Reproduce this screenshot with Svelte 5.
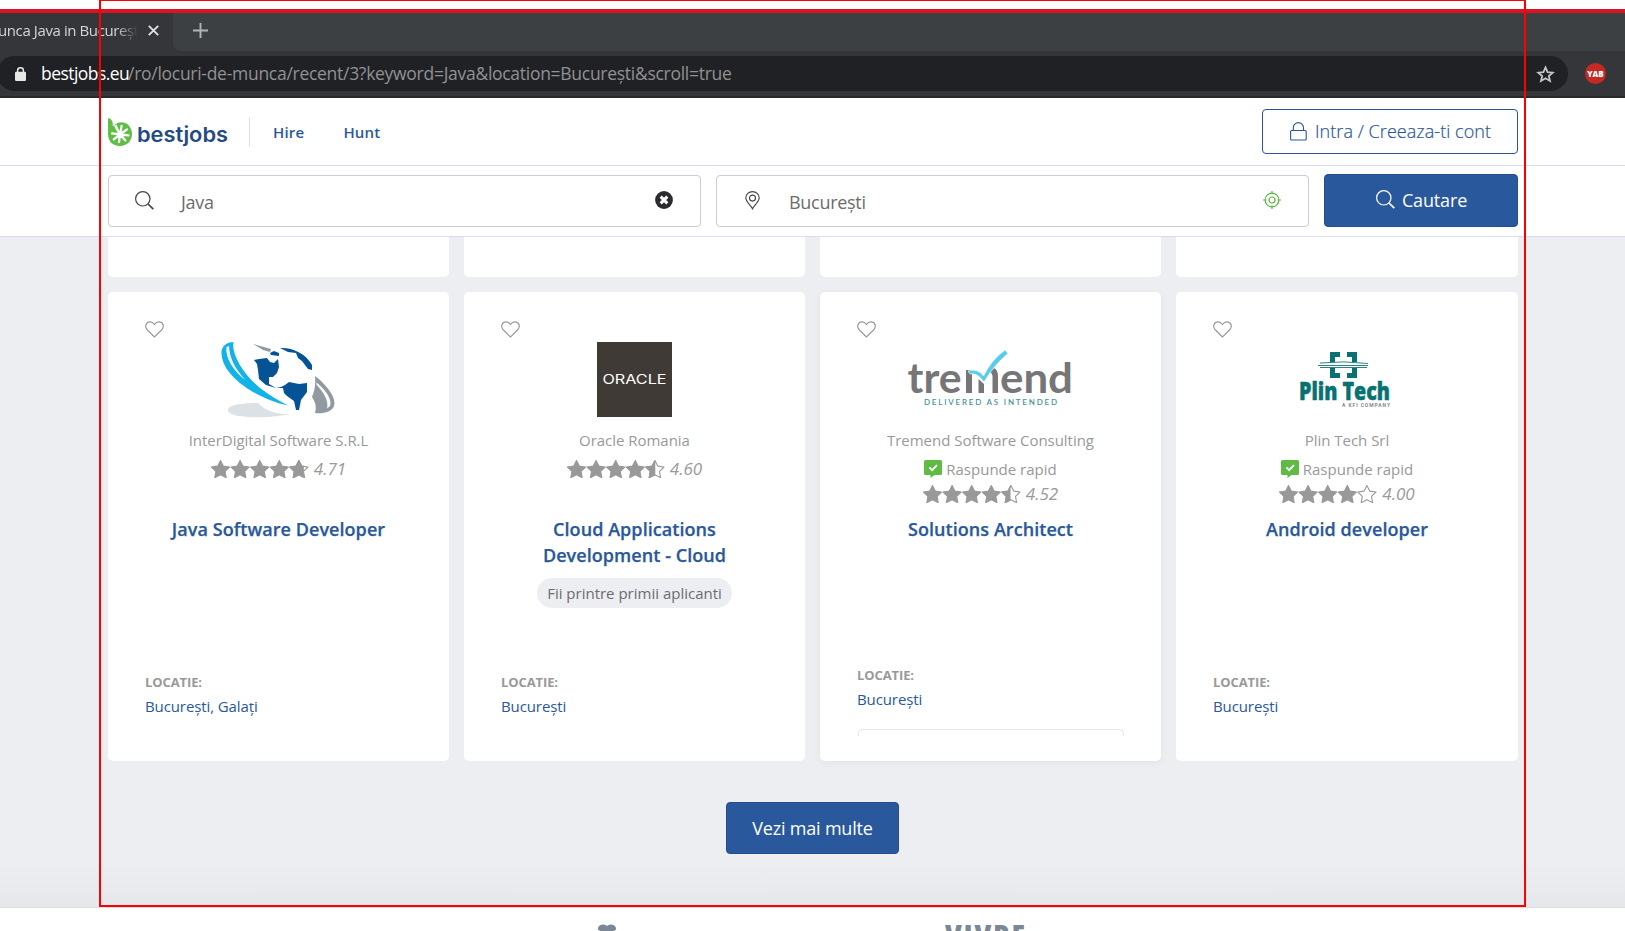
<script>
  const jobs = [
    { logo: 'globe', company: 'InterDigital Software S.R.L', fast: false, score: '4.71', last: 0.76, title: ['Java Software Developer'], place: 'București, Galați' },
    { logo: 'oracle', company: 'Oracle Romania', fast: false, score: '4.60', last: 0.52, title: ['Cloud Applications', 'Development - Cloud'], pill: 'Fii printre primii aplicanti', place: 'București' },
    { logo: 'tremend', company: 'Tremend Software Consulting', fast: true, score: '4.52', last: 0.48, title: ['Solutions Architect'], place: 'București', raised: true },
    { logo: 'plin', company: 'Plin Tech Srl', fast: true, score: '4.00', last: 0, title: ['Android developer'], place: 'București' }
  ];
  const starPath = 'M9.5 .4 L12.3 6.1 L18.6 7 L14.1 11.4 L15.2 17.7 L9.5 14.8 L3.8 17.7 L4.9 11.4 L.4 7 L6.7 6.1 Z';
</script>

{#snippet magnifier()}
  <svg class="ico" width="19" height="19" viewBox="0 0 19 19" fill="none" stroke="currentColor"><circle cx="7.8" cy="7.8" r="7.2" stroke-width="1.2" /><path d="M13 13l5.3 5.2" stroke-width="1.7" /></svg>
{/snippet}

<div class="screen">
  <div class="accent"></div>
  <div class="tabs">
    <div class="tab">
      <span class="tabtext">unca Java in București</span>
      <svg width="11" height="11" viewBox="0 0 11 11" stroke="#dfe0e2" stroke-width="1.9"><path d="M.8.8l9.4 9.4M10.2.8L.8 10.2" /></svg>
    </div>
    <div class="strip">
      <svg width="15" height="15" viewBox="0 0 15 15" stroke="#b1b3b5" stroke-width="1.9"><path d="M7.5 0v15M0 7.5h15" /></svg>
    </div>
  </div>
  <div class="toolbar">
    <div class="url">
      <svg width="11" height="14" viewBox="0 0 11 14"><rect y="4.8" width="11" height="9.2" rx="1.3" fill="#e8e8e9" /><path d="M2.6 6V3.4a2.9 2.6 0 0 1 5.8 0V6" fill="none" stroke="#e8e8e9" stroke-width="1.5" /></svg>
      <span class="host">bestjobs.eu</span><span class="path">/ro/locuri-de-munca/recent/3?keyword=Java&amp;location=București&amp;scroll=true</span>
      <svg class="bookmark" width="19" height="18" viewBox="0 0 19 18" fill="none" stroke="#c4c5c7" stroke-width="1.8"><path d="M9.5 2.4l2.1 4.7 5.1.5-3.9 3.4 1.2 5-4.5-2.7L5 16l1.2-5-3.9-3.4 5.1-.5z" /></svg>
    </div>
    <div class="yab">YAB</div>
  </div>

  <header>
    <div class="wrap head">
      <svg class="brand" width="124" height="32" viewBox="0 0 124 32">
        <path d="M0 0C4.200 1 5 4 4.800 8.300C7 6 10 4.300 13.500 4.300C19.500 4.300 24 9.500 24 16C24 23 19 28 12 28C4.500 28 0 23 0 16Z" fill="#5fbf45" />
        <g stroke="#fff" stroke-width="2.300" stroke-linecap="round"><path d="M12 16.500L7.600 8.500M12 16.500L13.600 8M12 16.500L19 11.400M12 16.500L20.500 17.300M12 16.500L17.300 22.300M12 16.500L11 24M12 16.500L5.800 21.300M12 16.500L4 15.300" /></g>
        <path d="M6 7.500L8.500 6.600 12 15.500Z" fill="#fff" />
        <text x="29" y="24" textLength="91" lengthAdjust="spacingAndGlyphs" class="brandtext">bestjobs</text>
      </svg>
      <nav><b>Hire</b><b>Hunt</b></nav>
      <div class="login">
        <svg width="17" height="19" viewBox="0 0 17 19" fill="none" stroke="currentColor" stroke-width="1.1"><rect x=".6" y="8.500" width="15.600" height="9.500" rx="1" /><path d="M3.300 8.500V5.800a5.100 5.200 0 0 1 10.200 0v2.700" /></svg>
        <span>Intra / Creeaza-ti cont</span>
      </div>
    </div>
  </header>

  <div class="search">
    <div class="wrap fields">
      <div class="field">
        {@render magnifier()}
        <span class="value">Java</span>
        <svg class="end" width="18" height="18" viewBox="0 0 18 18"><circle cx="9" cy="9" r="8.900" fill="#2b2b2e" /><path d="M5.700 5.700l6.600 6.600M12.300 5.700l-6.600 6.600" stroke="#fff" stroke-width="3.100" /></svg>
      </div>
      <div class="field loc">
        <svg class="ico" width="15" height="19" viewBox="0 0 15 19" fill="none" stroke="currentColor" stroke-width="1.100"><path d="M7.500 17.800C6 14.500.800 10.500.800 7a6.700 6.400 0 0 1 13.400 0c0 3.500-5.200 7.500-6.700 10.800z" /><circle cx="7.500" cy="7.100" r="3" /></svg>
        <span class="value">București</span>
        <svg class="end" width="18" height="18" viewBox="0 0 18 18" fill="none" stroke="#5fb946" stroke-width="1.200"><circle cx="9" cy="9" r="6.900" /><circle cx="9" cy="9" r="3" /><path d="M9 0v3.500M9 14.500V18M0 9h3.500M14.500 9H18" /></svg>
      </div>
      <div class="submit">{@render magnifier()}<span>Cautare</span></div>
    </div>
  </div>

  <main>
    <div class="wrap grid tails">
      {#each jobs as _}<div class="tail"></div>{/each}
    </div>
    <div class="wrap grid">
      {#each jobs as job}
        <article class:raised={job.raised}>
          <svg class="heart" width="19" height="17" viewBox="0 0 19 17" fill="none" stroke="#999" stroke-width="1.200"><path d="M9.500 16L2.200 8.800C-.400 6 .500 1.400 4.500.900C6.800.600 8.300 1.800 9.500 3.500C10.700 1.800 12.200.600 14.500.900C18.500 1.400 19.400 6 16.800 8.800Z" /></svg>
          <div class="logo">
            {#if job.logo === 'globe'}
              <svg width="116" height="76" viewBox="0 0 116 76">
                <path d="M7 68C7 63 20 61 37 61C42 66 50 72 68 72C55 76 7 78 7 68Z" fill="#dce1e5" />
                <path d="M12.500 0C10 12 23 33 39 46C48 53 58 59 67 63.500C40 58 3 37 .600 13C-.500 5 5 0 12.500 0Z" fill="#12b3e9" />
                <path d="M5.500 5C4 15 12 29 24.500 38C15 28 8.500 17 8 4Z" fill="#fff" />
                <path d="M32 2L50 7L49 10L42 8Z" fill="#929aa1" />
                <path d="M33 18L38 17L46 16L49 20L53 21L57 17L58 25L56 31L52 35L48 38L48 42L55 46L60 45L64 43L68 40L78 42L86 41L86 50L80 58L78 68L75 68L73 59L66 54L63 51L62 46L55 46L45 43L38 37L37 28L36 22Z" fill="#055397" />
                <path d="M49 11L53 9L58 11L58 14L50 13ZM59 6C70 5 85 11 91 23L91 28L87 27L81 19L77 16L75 11L67 10Z" fill="#055397" />
                <path d="M48 35L55 35L60 39L58 42L52 42L48 40Z" fill="#fff" />
                <path d="M94 34C105 42 116 56 113 64C111 70 102 72 94 71C96 64 94 60 91 55C93 50 95 44 94 34Z" fill="#929aa1" />
                <path d="M95.500 40.500C105 48 111.500 58 109 64L106 66.500C108 59 103 51 95.500 42.500Z" fill="#fff" />
              </svg>
            {:else if job.logo === 'oracle'}
              <svg width="75" height="75" viewBox="0 0 75 75"><rect width="75" height="75" fill="#3f3a35" /><text x="5.500" y="42" textLength="64" lengthAdjust="spacingAndGlyphs" class="oracle">ORACLE</text></svg>
            {:else if job.logo === 'tremend'}
              <svg width="170" height="75" viewBox="0 0 170 75">
                <text x="1.500" y="51" textLength="54" lengthAdjust="spacingAndGlyphs" class="tre">tre</text>
                <text x="94" y="51" textLength="73" lengthAdjust="spacingAndGlyphs" class="tre">end</text>
                <path d="M60 51V28H66V51M72.500 51V37L78 42V51M86.500 51V34Q86 31 84 30L88 26Q92 28 92 34V51" fill="#767678" />
                <path d="M62 29Q72 26 77.500 34Q86 17 99 8L102 11.500Q88 23 78 40Q71 30 64 32Z" fill="#58ccef" stroke="#fff" stroke-width=".6" />
                <text x="18" y="62.500" textLength="133" class="tagline">DELIVERED AS INTENDED</text>
              </svg>
            {:else}
              <svg width="94" height="75" viewBox="0 0 94 75" overflow="visible">
                <path d="M30 20V10H40V15H35V20M47 10H57V20H52V15H47M30 26V36H40V31H35V26M57 26V36H47V31H52V26" fill="#087171" />
                <path d="M20 21Q44 18.500 68 21.500M18 23.500H68M20 25.500H67" fill="none" stroke="#2f8586" stroke-width="1" />
                <text x="-1" y="58" textLength="91" lengthAdjust="spacingAndGlyphs" class="plin">Plin Tech</text>
                <text x="42" y="65" textLength="48" class="kfi">A KFI COMPANY</text>
              </svg>
            {/if}
          </div>
          <div class="company">{job.company}</div>
          <div class="meta">
            {#if job.fast}
              <div class="row fast">
                <svg width="18" height="18" viewBox="0 0 18 18"><path d="M1.500 0H16.500Q18 0 18 1.500V13.500Q18 15 16.500 15H10.500L6.500 18V15H1.500Q0 15 0 13.500V1.500Q0 0 1.500 0Z" fill="#5fbb46" /><path d="M5.400 7.400l2.700 2.700 4.900-5" fill="none" stroke="#fff" stroke-width="1.800" /></svg>
                <span>Raspunde rapid</span>
              </div>
            {/if}
            <div class="row">
              <svg class="stars" width="98" height="18" viewBox="0 0 98 18">
                {#each [0, 1, 2, 3, 4] as n}
                  <g transform="translate({n * 19.6} 0)">
                    {#if n < 4}
                      <path d={starPath} fill="#999" stroke="#999" stroke-width="1.1" stroke-linejoin="round" />
                    {:else}
                      <path d={starPath} fill="none" stroke="#999" stroke-width="1.100" stroke-linejoin="round" />
                      <svg width={19 * job.last} height="18"><path d={starPath} fill="#999" stroke="#999" stroke-width="1.1" /></svg>
                    {/if}
                  </g>
                {/each}
              </svg>
              <i>{job.score}</i>
            </div>
          </div>
          <h2>{#each job.title as line}<span>{line}</span>{/each}</h2>
          {#if job.pill}<div class="pill">{job.pill}</div>{/if}
          <div class="where"><b>LOCATIE:</b><span>{job.place}</span></div>
          {#if job.raised}<div class="peek"></div>{/if}
        </article>
      {/each}
    </div>
    <div class="more">Vezi mai multe</div>
  </main>

  <footer>
    <svg width="1625" height="23" viewBox="0 0 1625 23">
      <path d="M598 20Q597 22 601 23H613Q617 22 616 20Q615 16.500 611 16.500Q608 16.500 607 18Q606 16.500 603 16.500Q599 16.500 598 20Z" fill="#7b8794" />
      <text x="945" y="38.500" textLength="80" class="vivre">VIVRE</text>
    </svg>
  </footer>
  <div class="frame"></div>
</div>

<style>
  :global(body) { margin: 0; overflow: hidden; background: #fff; }
  .screen, .screen * { box-sizing: border-box; }
  .screen { position: relative; width: 1625px; height: 931px; overflow: hidden; background: #fff; font-family: "Open Sans", sans-serif; display: flex; flex-direction: column; color: #999; }
  .screen > * { flex-shrink: 0; }
  svg { display: block; flex-shrink: 0; }
  .accent { height: 4px; margin-top: 9px; background: #dc1320; }
  .tabs { height: 38px; display: flex; background: #35363a; }
  .tab { width: 173px; display: flex; align-items: center; padding-bottom: 4px; }
  .tabtext { width: 140px; margin: -1px 10px 0 -2px; overflow: hidden; white-space: nowrap; font-size: 15px; letter-spacing: -.4px; line-height: 22px; color: #d4d5d7; mask-image: linear-gradient(90deg, #000 118px, transparent 140px); }
  .strip { flex: 1; background: #3c4043; border-bottom-left-radius: 8px; padding: 10px 20px; }
  .toolbar { height: 47px; padding: 5px 0 0; display: flex; background: #35363a; border-bottom: 2px solid #28292c; }
  .url { width: 1571px; height: 35px; margin-left: -3px; border-radius: 18px; background: #202124; display: flex; align-items: center; padding: 0 13px 0 18px; font-size: 17.5px; white-space: pre; }
  .url span { margin-top: -2px; }
  .url .host { margin-left: 15px; color: #fff; width: 87px; letter-spacing: -.55px; }
  .path { color: #909193; letter-spacing: -.28px; }
  .bookmark { margin-left: auto; }
  .yab { width: 21px; height: 21px; margin: 7px 0 0 17px; border-radius: 50%; background: #c52a22; color: #fff; font: 900 8px/21px "Open Sans", sans-serif; text-align: center; }
  .wrap { width: 1410px; margin-left: 108px; }
  header { height: 68px; border-bottom: 1px solid #d9dcee; }
  .head { display: flex; height: 67px; align-items: flex-start; }
  .brand { margin-top: 20px; }
  .brandtext { font: 600 20.5px Inter, sans-serif; fill: #234a86; }
  nav { display: flex; gap: 39px; height: 28px; margin: 20px 0 0 17px; padding-left: 23px; border-left: 1px solid #d9dce8; align-items: center; font-size: 15px; letter-spacing: .2px; color: #2b589b; }
  nav b { font-weight: 600; }
  .login { width: 256px; height: 45px; margin: 11px 0 0 auto; display: flex; align-items: center; padding: 0 0 1px 27px; gap: 8px; border: 1px solid #2a5699; border-radius: 4px; color: #2a5699; font-size: 18px; white-space: nowrap; font-weight: 300; letter-spacing: .05px; -webkit-text-stroke: .2px #2a5699; }
  .search { height: 71px; border-bottom: 1px solid #d9dcee; }
  .fields { display: flex; padding-top: 8px; gap: 15px; }
  .field { width: 593px; height: 52px; margin-top: 1px; display: flex; align-items: center; padding: 0 27px 0 26px; border: 1px solid #ccc; border-radius: 4px; font-size: 18px; color: #6c6c6c; }
  .ico { margin-top: -2px; }
  .field .ico { color: #444; }
  .value { margin: 1px 0 0 27px; letter-spacing: -.3px; }
  .loc { padding-left: 28px; }
  .loc .value { margin-left: 29px; }
  .end { margin: -2px 0 0 auto; }
  .submit { flex: 1; height: 53px; display: flex; justify-content: center; align-items: center; gap: 7px; padding-left: 1px; border: 1px solid #244e8e; border-radius: 4px; background: #29589c; color: #fff; font-size: 18px; letter-spacing: -.15px; }
  .submit span { margin-top: -1px; }
  main { height: 671px; background: linear-gradient(#edeef2 625px, #e5e7ea 670px); border-bottom: 1px solid #dcdee1; }
  .grid { display: grid; grid-template-columns: 341px 341px 341px 342px; gap: 15px; }
  .tails { margin-bottom: 15px; }
  .tail { height: 40px; background: #fff; border-radius: 0 0 5px 5px; }
  article { height: 469px; padding: 29px 37px 43px; display: flex; flex-direction: column; align-items: center; background: #fff; border-radius: 5px; }
  .raised { padding-bottom: 25px; box-shadow: 0 2px 8px rgba(0, 0, 0, .05); }
  .heart { align-self: flex-start; margin: 0 0 4px -.5px; }
  .logo { height: 75px; margin-bottom: 12px; }
  .company { font-size: 15px; line-height: 22px; letter-spacing: -.03px; white-space: nowrap; }
  .meta { height: 65px; padding-top: 5px; }
  .row { height: 25px; display: flex; justify-content: center; align-items: center; gap: 5px; font-size: 17px; }
  .fast { font-size: 15px; gap: 4px; }
  .fast span { padding-top: 1px; }
  h2 { margin: 0; font-size: 18px; line-height: 26px; letter-spacing: .06px; font-weight: 600; color: #29589c; -webkit-text-stroke: .25px #29589c; display: flex; flex-direction: column; align-items: center; white-space: nowrap; }
  .pill { height: 30px; margin-top: 10px; padding: 0 10px; border-radius: 15px; background: #edeef2; color: #6c6c6c; font-size: 15px; line-height: 30px; white-space: nowrap; }
  .where { align-self: stretch; margin-top: auto; display: flex; flex-direction: column; font-size: 15px; line-height: 24px; letter-spacing: -.1px; color: #29589c; }
  .where b { font-size: 13px; font-weight: 700; color: #999; }
  .peek { align-self: stretch; height: 7px; margin: 18px 0 0 1px; border: 1px solid #e3e6f0; border-bottom: 0; border-radius: 5px 5px 0 0; }
  .more { width: 173px; height: 52px; margin: 41px 0 0 726px; border: 1px solid #244e8e; border-radius: 4px; background: #29589c; color: #fff; font-size: 18px; letter-spacing: -.2px; line-height: 50px; text-align: center; }
  .oracle { font: 400 12.5px Inter, sans-serif; fill: #fff; }
  .tre { font: 700 42px Lato, sans-serif; fill: #767678; }
  .tagline { font: 600 8px Lato, sans-serif; fill: #45969a; }
  .plin { font: 800 25.5px "Open Sans", sans-serif; fill: #087171; stroke: #087171; stroke-width: .5px; }
  .kfi { font: 700 5px Roboto, sans-serif; fill: #888; }
  .vivre { font: 900 30px "Open Sans", sans-serif; font-stretch: 75%; fill: #7b8794; }
  footer { height: 23px; }
  .frame { position: absolute; left: 99px; top: 0; width: 1427px; height: 907px; border: 2px solid #f00; border-top-width: 1px; }
</style>
